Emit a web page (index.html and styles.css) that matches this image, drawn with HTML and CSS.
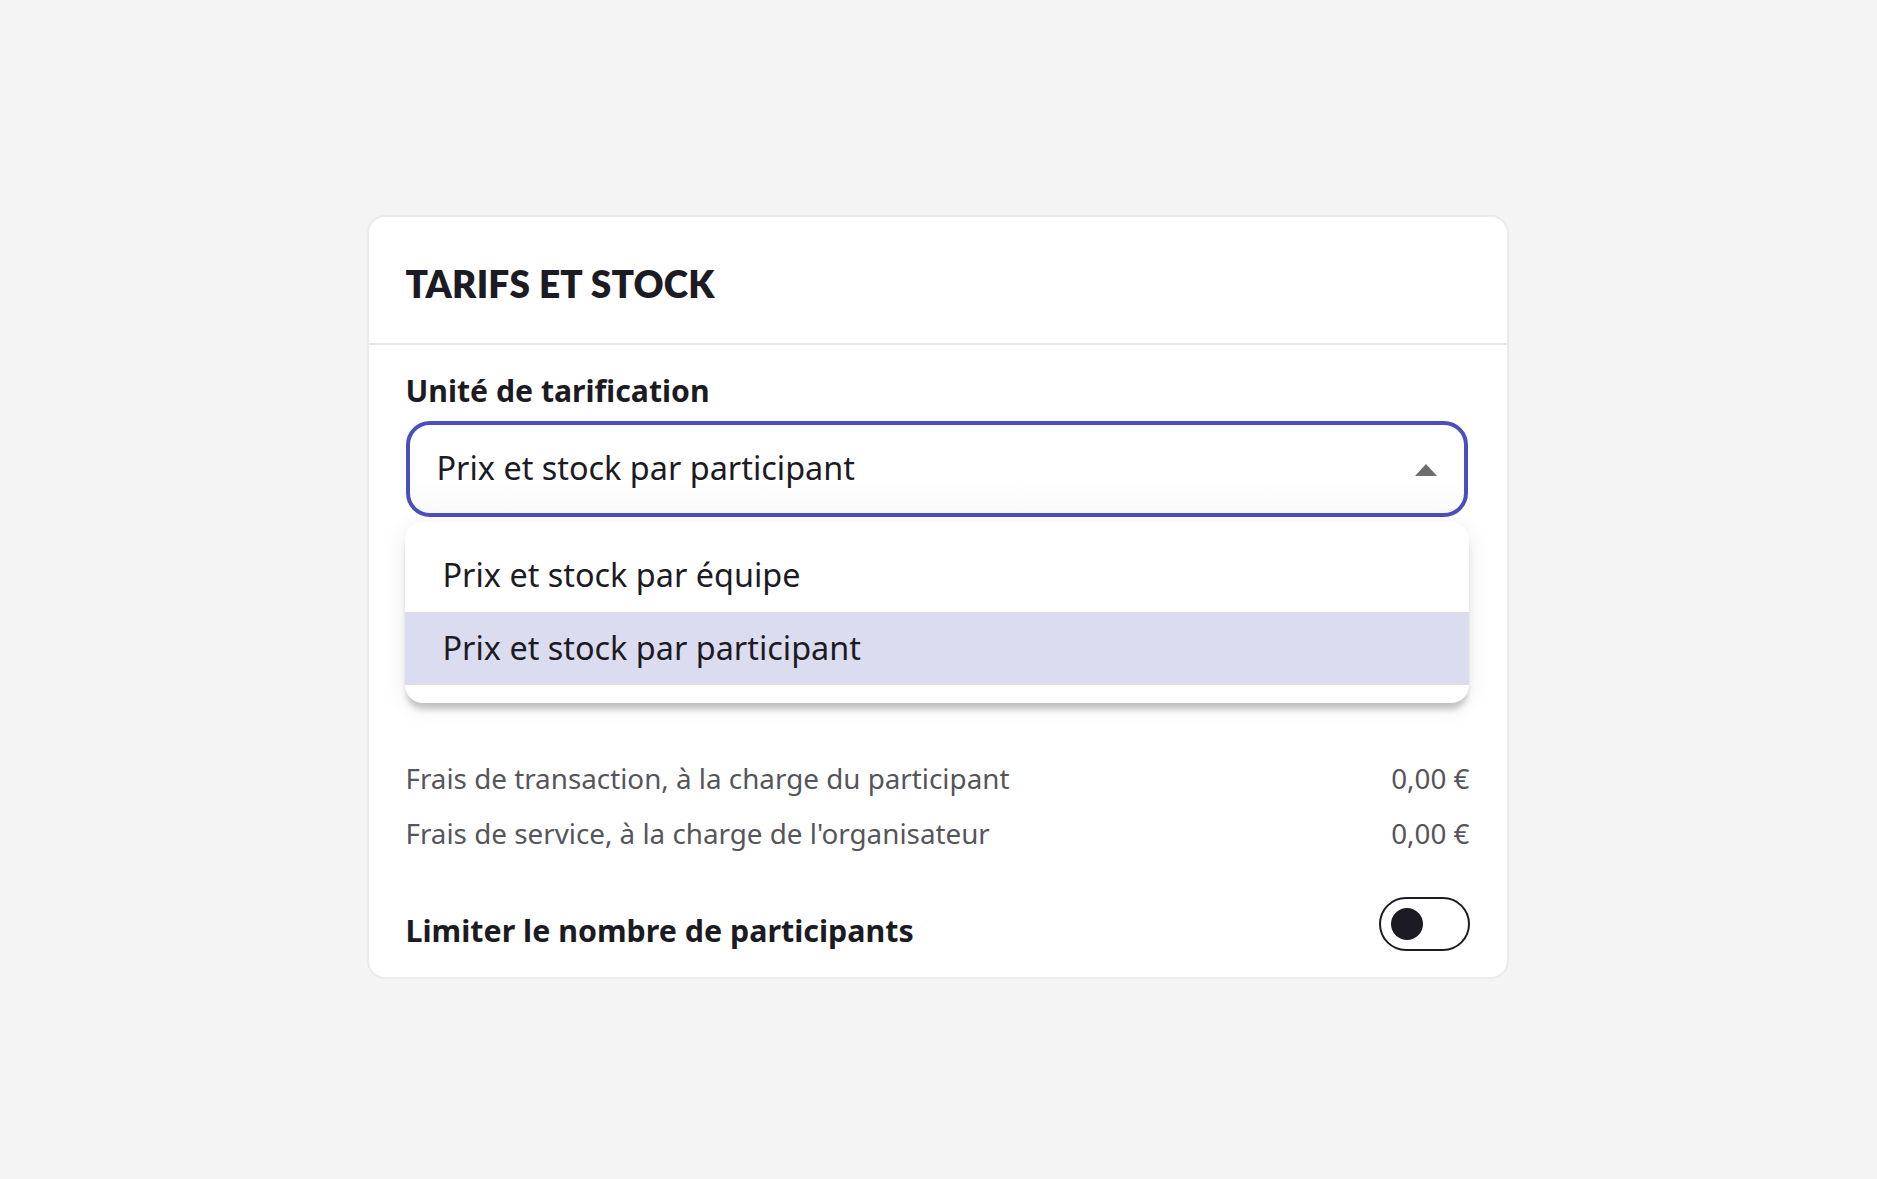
FILE: index.html
```html
<!DOCTYPE html>
<html lang="fr">
<head>
<meta charset="utf-8">
<title>Tarifs et stock</title>
<link rel="stylesheet" href="styles.css">
</head>
<body>
<main class="page">
  <section class="card">
    <header class="card-header">
      <h2 class="card-title">TARIFS ET STOCK</h2>
    </header>
    <div class="card-body">
      <div class="field">
        <label class="field-label">Unité de tarification</label>
        <div class="select-wrap">
          <div class="select">
            <span class="select-value">Prix et stock par participant</span>
            <span class="caret"></span>
          </div>
          <ul class="menu">
            <li class="menu-item">Prix et stock par équipe</li>
            <li class="menu-item selected">Prix et stock par participant</li>
          </ul>
        </div>
      </div>
      <div class="hidden-area"></div>
      <div class="fees">
        <div class="fee-row"><span>Frais de transaction, à la charge du participant</span><span>0,00 €</span></div>
        <div class="fee-row"><span>Frais de service, à la charge de l'organisateur</span><span>0,00 €</span></div>
      </div>
      <div class="limit-row">
        <span class="limit-label">Limiter le nombre de participants</span>
        <span class="toggle"><span class="knob"></span></span>
      </div>
    </div>
  </section>
</main>
</body>
</html>
```
FILE: styles.css
```css
* { box-sizing: border-box; }
html, body { margin: 0; padding: 0; }
body {
  background: #f4f4f4;
  font-family: "Noto Sans", Lato, sans-serif;
  color: #1c1b24;
  width: 1877px;
  height: 1179px;
  overflow: hidden;
}
.page {
  display: flex;
  justify-content: center;
  padding-top: 215px;
}
.card {
  width: 1142px;
  height: 764px;
  background: #fff;
  border: 2px solid #ebebeb;
  border-radius: 18px;
  margin-left: -2px;
}
.card-header {
  height: 128px;
  border-bottom: 2px solid #e8e8ea;
  display: flex;
  align-items: center;
  padding: 0 37px;
}
.card-title {
  margin: 0;
  font-family: Lato, sans-serif;
  font-size: 37px;
  font-weight: 800;
  letter-spacing: 0.2px;
  padding-top: 6px;
}
.card-body {
  padding: 0 37px;
}
.field { padding-top: 26px; }
.field-label {
  display: block;
  font-size: 30.2px;
  font-weight: 700;
  line-height: 40px;
  margin-bottom: 10px;
}
.select-wrap { position: relative; margin-right: 2px; }
.select {
  height: 96px;
  border: 4px solid #4a4fbe;
  border-radius: 24px;
  display: flex;
  align-items: center;
  justify-content: space-between;
  padding: 0 27px 0 27px;
  background: linear-gradient(#fff 60%, #fafafa);
}
.select-value { font-size: 32.4px; padding-bottom: 4px; }
.caret {
  width: 0; height: 0;
  border-left: 11.5px solid transparent;
  border-right: 11.5px solid transparent;
  border-bottom: 12px solid #6d6d6d;
  margin-top: 2px;
}
.menu {
  position: absolute;
  left: -1px;
  right: -1px;
  top: 101px;
  margin: 0;
  padding: 17px 0 18px;
  list-style: none;
  background: #fff;
  border-radius: 18px;
  box-shadow: 0 8px 6px -2px rgba(0,0,0,0.22), 0 4px 24px rgba(0,0,0,0.08);
  z-index: 2;
}
.menu-item {
  height: 73px;
  display: flex;
  align-items: center;
  padding-left: 38px;
  font-size: 32.4px;
  padding-bottom: 4px;
}
.menu-item.selected { background: #dcdcf1; }
.hidden-area { height: 243px; }
.fees { display: flex; flex-direction: column; gap: 18px; }
.fee-row {
  display: flex;
  justify-content: space-between;
  font-size: 27.8px;
  line-height: 37px;
  color: #55555c;
}
.limit-row {
  display: flex;
  justify-content: space-between;
  align-items: center;
  margin-top: 44px;
}
.limit-label { font-size: 30.4px; font-weight: 700; padding-top: 14px; }
.toggle {
  width: 91px;
  height: 54px;
  border: 2.5px solid #1c1b24;
  border-radius: 27px;
  display: flex;
  align-items: center;
  padding-left: 10px;
}
.knob {
  width: 32px; height: 32px;
  border-radius: 50%;
  background: #1c1b24;
}
```
